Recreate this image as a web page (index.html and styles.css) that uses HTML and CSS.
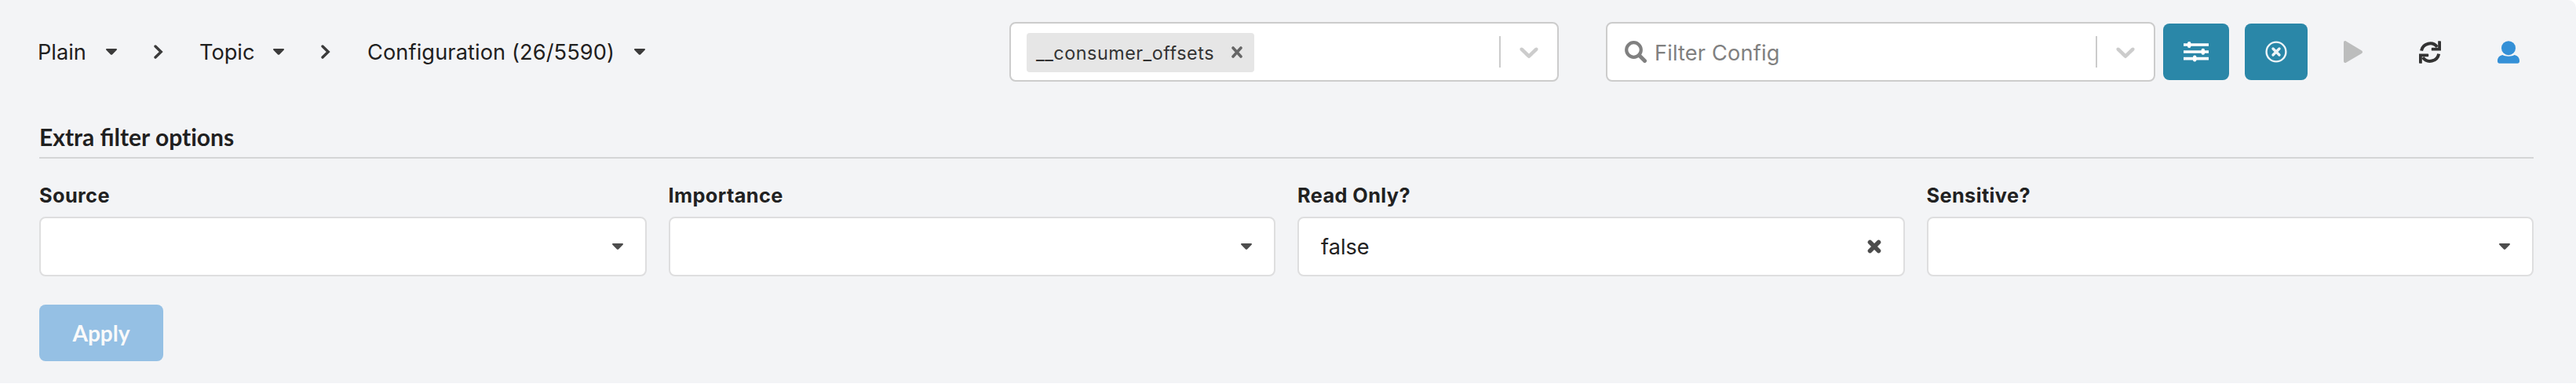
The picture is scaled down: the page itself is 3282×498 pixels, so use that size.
FILE: index.html
```
<!DOCTYPE html>
<html lang="en">
<head>
<meta charset="utf-8">
<title>Topic configuration</title>
<link rel="stylesheet" href="styles.css">
</head>
<body>
<svg class="defs" aria-hidden="true">
  <symbol id="caret" viewBox="0 0 14 8"><path d="M1.2 0h11.6c1.1 0 1.5 1 .8 1.700L8 7.400c-.6.6-1.400.6-2 0L.4 1.700C-.3 1 .1 0 1.200 0z" fill="currentColor"/></symbol>
  <symbol id="chevron" viewBox="0 0 20 20"><path d="M4.516 7.548c.436-.446 1.043-.481 1.576 0L10 11.295l3.908-3.747c.533-.481 1.141-.446 1.574 0 .436.445.408 1.197 0 1.615-.406.418-4.695 4.502-4.695 4.502a1.095 1.095 0 0 1-1.576 0S4.924 9.581 4.516 9.163s-.436-1.170 0-1.615z" fill="currentColor"/></symbol>
  <symbol id="angle" viewBox="0 0 12 18"><path d="M2 2l7.200 7L2 16" fill="none" stroke="currentColor" stroke-width="3.4" stroke-linecap="round"/></symbol>
</svg>
<main class="panel">
  <header class="toolbar">
    <nav class="crumbs">
      <span class="crumb plain">Plain</span><svg class="caret"><use href="#caret"/></svg>
      <svg class="angle"><use href="#angle"/></svg>
      <span class="crumb topic">Topic</span><svg class="caret"><use href="#caret"/></svg>
      <svg class="angle"><use href="#angle"/></svg>
      <span class="crumb config">Configuration (26/5590)</span><svg class="caret"><use href="#caret"/></svg>
    </nav>
    <div class="select">
      <div class="tag"><span>__consumer_offsets</span>
        <svg class="remove" viewBox="0 0 14 15"><path d="M2 2l10 11M12 2L2 13" stroke="#666" stroke-width="3.6" stroke-linecap="round"/></svg>
      </div>
      <div class="indicator"><svg><use href="#chevron"/></svg></div>
    </div>
    <div class="select filter">
      <svg class="search" viewBox="0 0 28 28"><circle cx="11.5" cy="11.5" r="9.3" fill="none" stroke="#808080" stroke-width="4.2"/><path d="M18.5 18.5l7 7" stroke="#808080" stroke-width="5" stroke-linecap="round"/></svg>
      <span class="placeholder">Filter Config</span>
      <div class="indicator"><svg><use href="#chevron"/></svg></div>
    </div>
    <button class="square sliders"><svg width="32" height="26" viewBox="0 0 32 26" fill="#fff"><path d="M0 2.2h32v3.6H0zM0 11.2h32v3.6H0zM0 19.8h32v3.6H0z"/><rect x="5" y="0" width="4.4" height="8" rx="2"/><rect x="22.6" y="8.8" width="4.4" height="8" rx="2"/><rect x="12" y="17.4" width="4.4" height="8" rx="2"/></svg></button>
    <button class="square clear"><svg width="28" height="28" viewBox="0 0 28 28" fill="none" stroke="#eef5f8"><circle cx="14" cy="14" r="12.4" stroke-width="2.4"/><path d="M10 10l8 8M18 10l-8 8" stroke-width="3.4" stroke-linecap="round"/></svg></button>
    <svg class="play" viewBox="0 0 24 28"><path d="M0 2C0 .4 1.5-.4 3 .4l19.6 11.9c1.9 1.1 1.9 2.9 0 4L3 27.7c-1.5.8-3 0-3-1.6z" fill="#bcbdbd"/></svg>
    <svg class="refresh" viewBox="0 0 28 28.5"><g fill="none" stroke="#333" stroke-width="4"><path d="M3 12.3A11.4 11.4 0 0 1 23.2 7.6"/><path d="M25.2 16.3A11.4 11.4 0 0 1 4.8 20.9"/></g><path d="M24.2 0h2.9q.9 0 .9.9V12.3H16.7q-.9 0-.9-.9V9.4q0-.9.9-.9h7.5zM3.8 28.5H.9q-.9 0-.9-.9V16.2h11.3q.9 0 .9.9v2q0 .9-.9.9H3.8z" fill="#333"/></svg>
    <svg class="user" viewBox="0 0 28 28.6" fill="#3490d7"><circle cx="14" cy="9" r="9"/><path d="M6.4 17.8C2.3 18.6 0 21.5 0 25.2v.9c0 1.4 1.1 2.5 2.5 2.5h23c1.4 0 2.5-1.1 2.5-2.5v-.9c0-3.7-2.3-6.6-6.4-7.4-2 1-4.5 1.7-7.6 1.7s-5.6-.7-7.6-1.7z"/></svg>
  </header>
  <section class="options">
    <h4 class="title">Extra filter <span>options</span></h4>
    <div class="fields">
      <div class="field"><label>Source</label><div class="dropdown"><svg class="caret"><use href="#caret"/></svg></div></div>
      <div class="field"><label>Importance</label><div class="dropdown"><svg class="caret"><use href="#caret"/></svg></div></div>
      <div class="field"><label>Read Only?</label><div class="dropdown"><span class="value">false</span><svg class="cross" viewBox="0 0 18 18"><path d="M3.5 3.5l11 11M14.5 3.5l-11 11" stroke="#4d4d4d" stroke-width="5.6" stroke-linecap="round"/></svg></div></div>
      <div class="field"><label>Sensitive?</label><div class="dropdown"><svg class="caret"><use href="#caret"/></svg></div></div>
    </div>
    <button class="apply">Apply</button>
  </section>
</main>
</body>
</html>
```
FILE: styles.css
```
* { box-sizing: border-box; }
body { margin: 0; background: #fff; color: #212121; font-family: Inter, "Liberation Sans", sans-serif; font-size: 27.2px; }
button { border: 0; padding: 0; }
svg { display: block; flex: none; }
.defs { width: 0; height: 0; overflow: hidden; }
.panel { height: 488px; background: #f3f4f6; border-top-right-radius: 10px; }

.toolbar { display: flex; align-items: center; height: 132px; }
.crumbs { display: flex; align-items: center; width: 1286px; flex: none; padding-left: 47px; color: #1f2020; }
.crumb { white-space: nowrap; flex: none; padding-top: 1px; line-height: 36px; }
.plain { width: 88px; padding-left: 1px; }
.topic { width: 94px; margin-left: -1px; }
.config { width: 340px; letter-spacing: 0.1px; }
.caret { width: 14px; height: 8px; color: #3a3a3a; }
.angle { width: 12px; height: 18px; margin: 0 47px; color: #3a3a3a; }

.select { display: flex; align-items: center; flex: none; width: 700px; height: 76px; padding-left: 20px; background: #fff; border: 2px solid #ccc; border-radius: 8px; }
.filter { margin-left: 60px; padding-left: 22px; }
.tag { display: flex; align-items: center; justify-content: space-between; width: 290px; height: 50px; margin-bottom: -2px; padding: 0 15px 0 12px; background: #e6e6e6; border-radius: 4px; color: #333; font-size: 23.3px; letter-spacing: 0.55px; white-space: nowrap; }
.remove { width: 14px; height: 15px; }
.tag .remove { margin-bottom: 2px; }
.indicator { display: flex; align-items: center; width: 74px; height: 40px; margin-left: auto; padding-left: 16px; border-left: 2px solid #ccc; color: #ccc; }
.indicator svg { width: 40px; height: 40px; }
.search { width: 28px; height: 28px; }
.placeholder { margin: 2px 0 0 10px; color: #808080; letter-spacing: 0.15px; white-space: nowrap; }

.square { display: flex; align-items: center; justify-content: center; flex: none; height: 72px; background: #2a87a8; border-radius: 8px; }
.sliders { width: 84px; margin-left: 10px; }
.clear { width: 80px; margin-left: 20px; }
.play { width: 24px; height: 28px; margin-left: 46px; }
.refresh { width: 28px; height: 29px; margin-left: 72px; }
.user { width: 28px; height: 29px; margin-left: 72px; }

.options { padding: 23px 54px 0 50px; }
.title { height: 47px; margin: 0; border-bottom: 2px solid #d4d5d6; font: 700 30px/39px Lato, sans-serif; color: #1f2020; }
.title span { font-variant-ligatures: none; }
.fields { display: grid; grid-template-columns: repeat(4, 1fr); gap: 28px; margin-top: 29px; }
.field label { display: block; width: max-content; height: 45px; font-size: 25.3px; font-weight: 700; letter-spacing: 0.4px; line-height: 36px; }
.dropdown { display: flex; align-items: center; height: 76px; padding: 0 28px 0 27px; background: #fff; border: 2px solid #dededf; border-radius: 8px; }
.dropdown .caret { margin-left: auto; color: #4d4d4d; }
.value { margin-left: 1px; }
.cross { width: 18px; height: 18px; margin-left: auto; }
.apply { display: block; width: 158px; height: 72px; margin-top: 36px; border-radius: 8px; background: #95c0e4; color: #fafafa; font: 700 28px/70px Lato, sans-serif; }
```
